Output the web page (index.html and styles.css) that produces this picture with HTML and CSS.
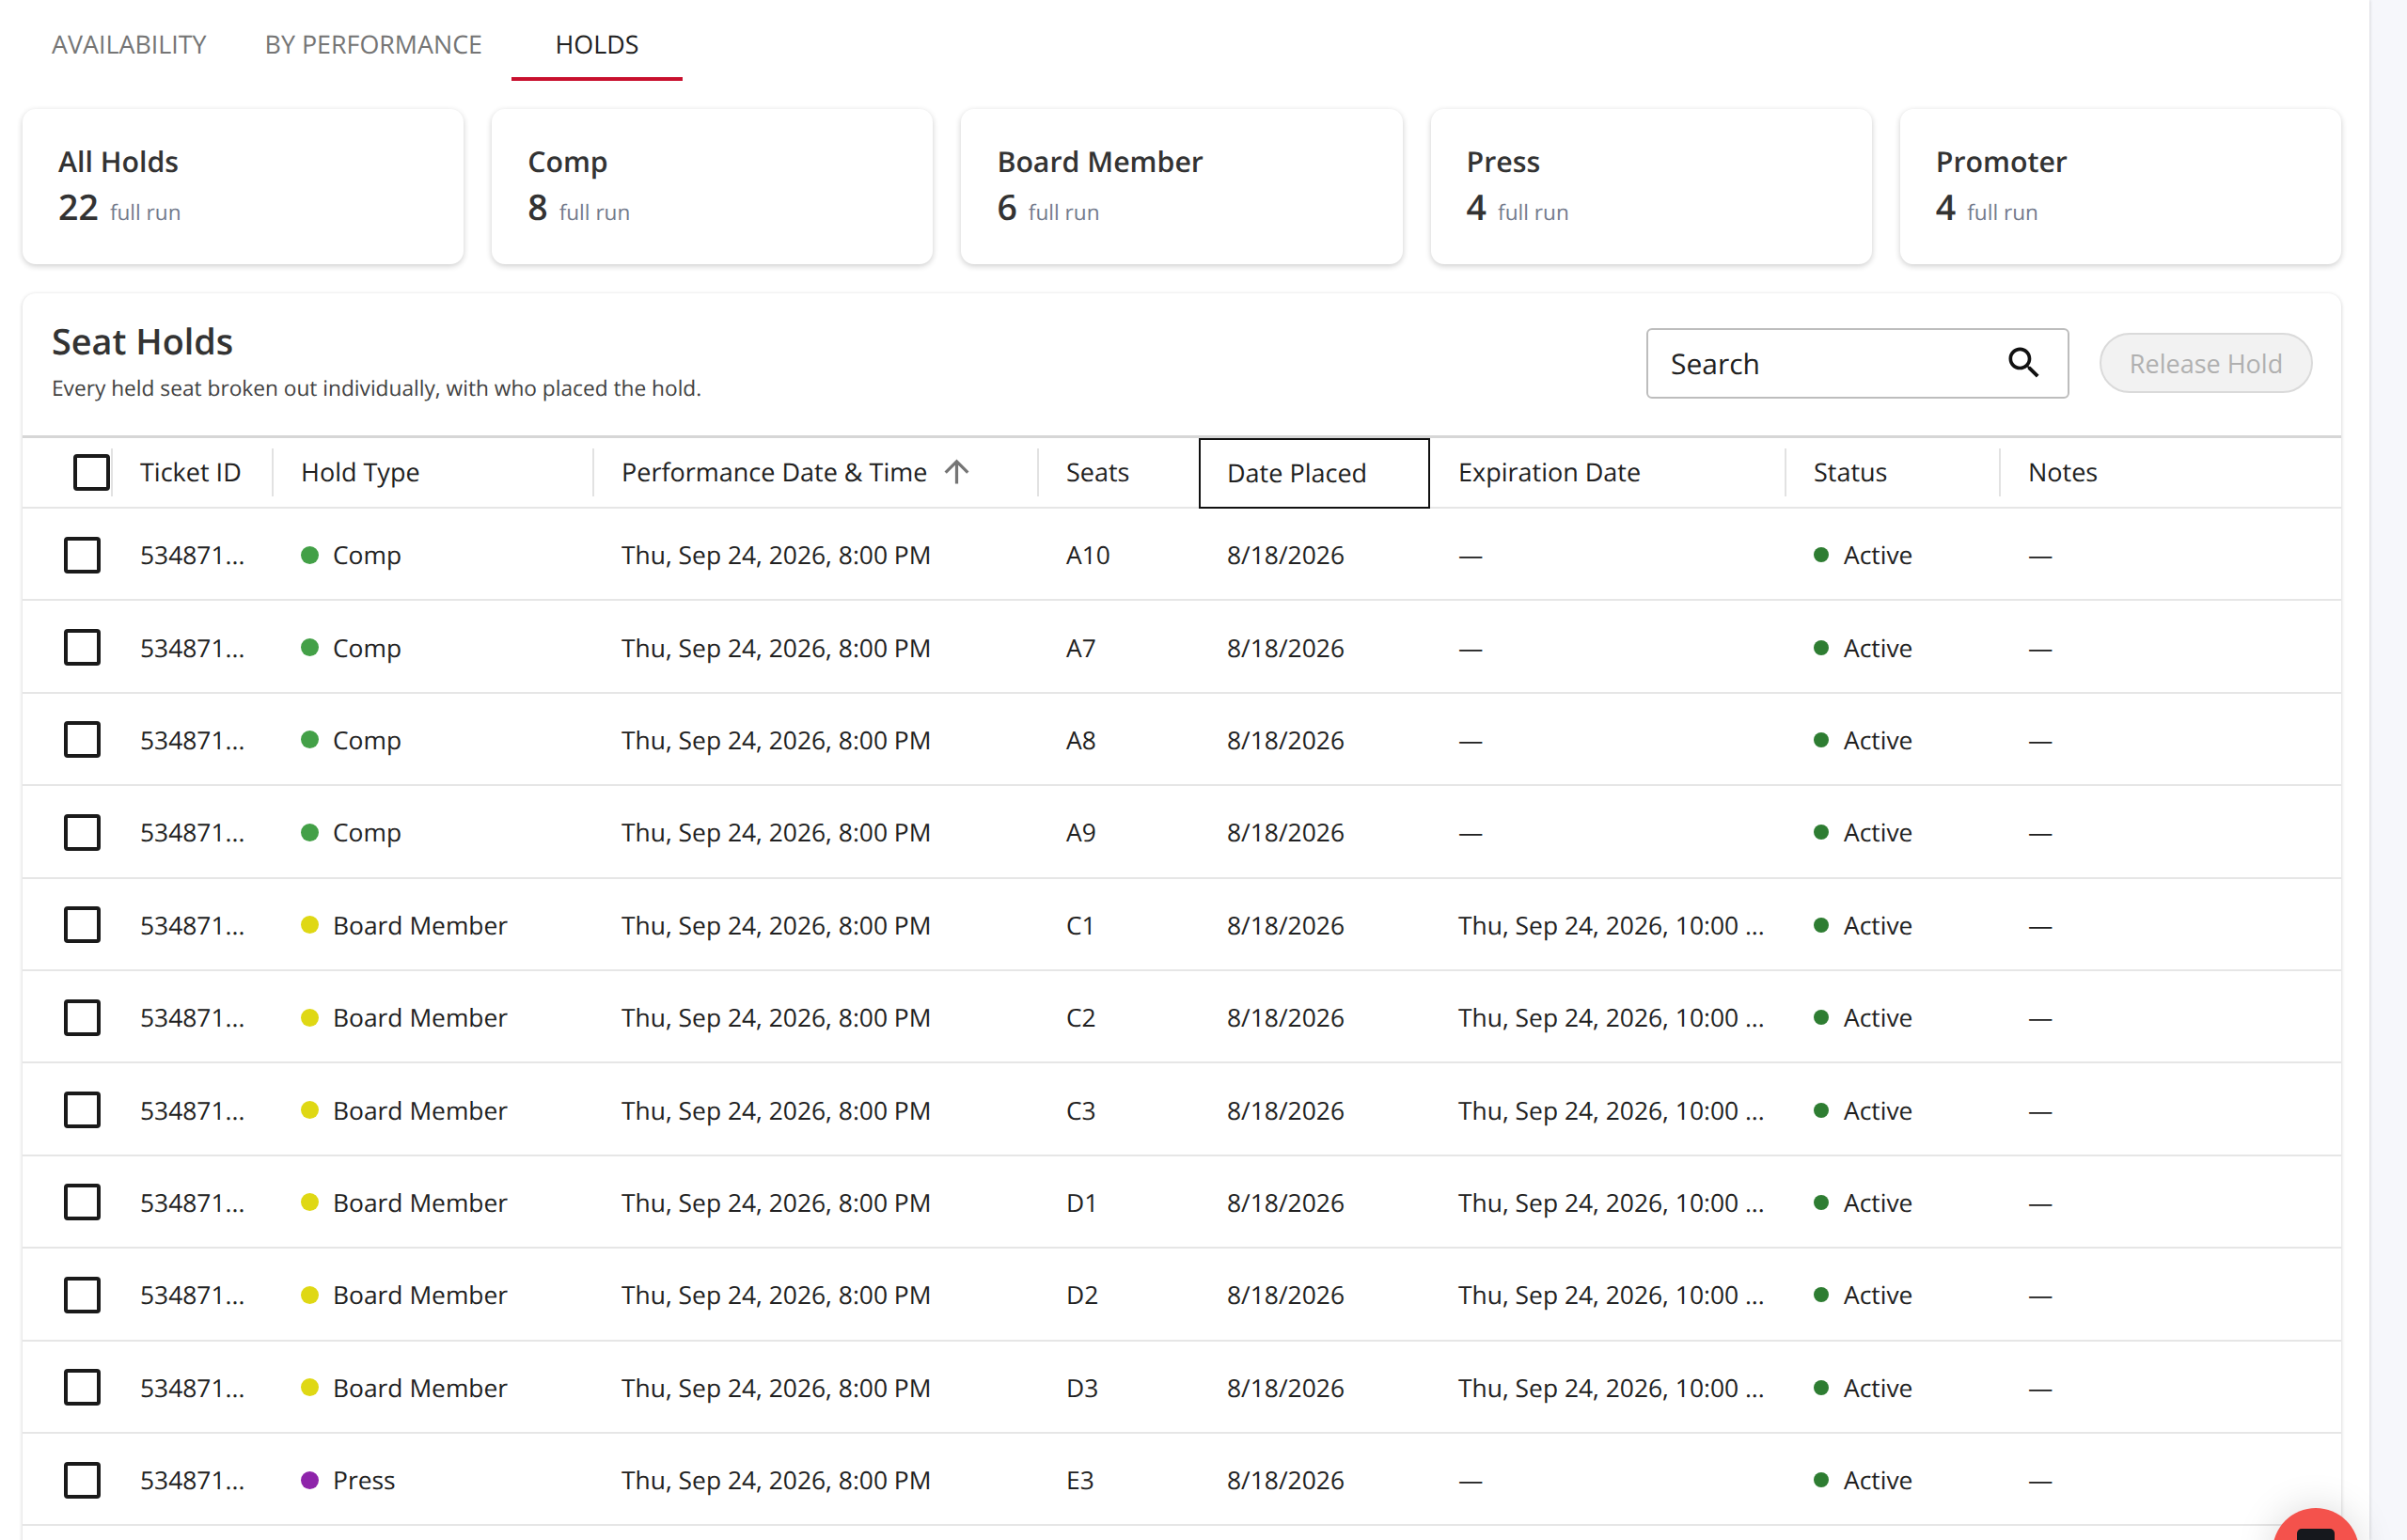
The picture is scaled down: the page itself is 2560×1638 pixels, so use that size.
FILE: index.html
```html
<!DOCTYPE html>
<html lang="en">
<head>
    <meta charset="UTF-8">
    <title>Holds</title>
    <link rel="stylesheet" href="styles.css">
</head>
<body>
    <div class="page">
        <div class="tabs">
            <a class="tab">AVAILABILITY</a>
            <a class="tab">BY PERFORMANCE</a>
            <a class="tab active">HOLDS</a>
        </div>

        <div class="cards">
            <div class="card"><div class="card-title">All Holds</div><div class="card-value"><span class="num">22</span><span class="unit">full run</span></div></div>
            <div class="card"><div class="card-title">Comp</div><div class="card-value"><span class="num">8</span><span class="unit">full run</span></div></div>
            <div class="card"><div class="card-title">Board Member</div><div class="card-value"><span class="num">6</span><span class="unit">full run</span></div></div>
            <div class="card"><div class="card-title">Press</div><div class="card-value"><span class="num">4</span><span class="unit">full run</span></div></div>
            <div class="card"><div class="card-title">Promoter</div><div class="card-value"><span class="num">4</span><span class="unit">full run</span></div></div>
        </div>

        <div class="panel">
            <div class="panel-head">
                <div class="panel-text">
                    <h2>Seat Holds</h2>
                    <p>Every held seat broken out individually, with who placed the hold.</p>
                </div>
                <div class="search">
                    <span>Search</span>
                    <svg viewBox="0 0 24 24"><path d="M15.5 14h-.79l-.28-.27C15.41 12.59 16 11.11 16 9.5 16 5.91 13.09 3 9.5 3S3 5.91 3 9.5 5.91 16 9.5 16c1.61 0 3.09-.59 4.23-1.57l.27.28v.79l5 4.99L20.49 19l-4.99-5zm-6 0C7.01 14 5 11.99 5 9.5S7.01 5 9.5 5 14 7.01 14 9.5 11.99 14 9.5 14z"/></svg>
                </div>
                <button class="release" disabled>Release Hold</button>
            </div>

            <div class="row head">
                <div class="cell check"><span class="box"></span></div>
                <div class="cell sep">Ticket ID</div>
                <div class="cell sep">Hold Type</div>
                <div class="cell sep">Performance Date &amp; Time
                    <svg class="arrow" viewBox="0 0 24 24"><path d="M4 12l1.41 1.41L11 7.83V20h2V7.83l5.58 5.59L20 12l-8-8-8 8z"/></svg>
                </div>
                <div class="cell sep">Seats</div>
                <div class="cell focused">Date Placed</div>
                <div class="cell">Expiration Date</div>
                <div class="cell sep">Status</div>
                <div class="cell sep">Notes</div>
            </div>

            <div class="row">
                <div class="cell check"><span class="box"></span></div><div class="cell">534871...</div>
                <div class="cell"><i class="dot comp"></i>Comp</div><div class="cell">Thu, Sep 24, 2026, 8:00 PM</div>
                <div class="cell">A10</div><div class="cell">8/18/2026</div><div class="cell">—</div>
                <div class="cell"><i class="status"></i>Active</div><div class="cell">—</div>
            </div>
            <div class="row">
                <div class="cell check"><span class="box"></span></div><div class="cell">534871...</div>
                <div class="cell"><i class="dot comp"></i>Comp</div><div class="cell">Thu, Sep 24, 2026, 8:00 PM</div>
                <div class="cell">A7</div><div class="cell">8/18/2026</div><div class="cell">—</div>
                <div class="cell"><i class="status"></i>Active</div><div class="cell">—</div>
            </div>
            <div class="row">
                <div class="cell check"><span class="box"></span></div><div class="cell">534871...</div>
                <div class="cell"><i class="dot comp"></i>Comp</div><div class="cell">Thu, Sep 24, 2026, 8:00 PM</div>
                <div class="cell">A8</div><div class="cell">8/18/2026</div><div class="cell">—</div>
                <div class="cell"><i class="status"></i>Active</div><div class="cell">—</div>
            </div>
            <div class="row">
                <div class="cell check"><span class="box"></span></div><div class="cell">534871...</div>
                <div class="cell"><i class="dot comp"></i>Comp</div><div class="cell">Thu, Sep 24, 2026, 8:00 PM</div>
                <div class="cell">A9</div><div class="cell">8/18/2026</div><div class="cell">—</div>
                <div class="cell"><i class="status"></i>Active</div><div class="cell">—</div>
            </div>
            <div class="row">
                <div class="cell check"><span class="box"></span></div><div class="cell">534871...</div>
                <div class="cell"><i class="dot board"></i>Board Member</div><div class="cell">Thu, Sep 24, 2026, 8:00 PM</div>
                <div class="cell">C1</div><div class="cell">8/18/2026</div><div class="cell">Thu, Sep 24, 2026, 10:00 ...</div>
                <div class="cell"><i class="status"></i>Active</div><div class="cell">—</div>
            </div>
            <div class="row">
                <div class="cell check"><span class="box"></span></div><div class="cell">534871...</div>
                <div class="cell"><i class="dot board"></i>Board Member</div><div class="cell">Thu, Sep 24, 2026, 8:00 PM</div>
                <div class="cell">C2</div><div class="cell">8/18/2026</div><div class="cell">Thu, Sep 24, 2026, 10:00 ...</div>
                <div class="cell"><i class="status"></i>Active</div><div class="cell">—</div>
            </div>
            <div class="row">
                <div class="cell check"><span class="box"></span></div><div class="cell">534871...</div>
                <div class="cell"><i class="dot board"></i>Board Member</div><div class="cell">Thu, Sep 24, 2026, 8:00 PM</div>
                <div class="cell">C3</div><div class="cell">8/18/2026</div><div class="cell">Thu, Sep 24, 2026, 10:00 ...</div>
                <div class="cell"><i class="status"></i>Active</div><div class="cell">—</div>
            </div>
            <div class="row">
                <div class="cell check"><span class="box"></span></div><div class="cell">534871...</div>
                <div class="cell"><i class="dot board"></i>Board Member</div><div class="cell">Thu, Sep 24, 2026, 8:00 PM</div>
                <div class="cell">D1</div><div class="cell">8/18/2026</div><div class="cell">Thu, Sep 24, 2026, 10:00 ...</div>
                <div class="cell"><i class="status"></i>Active</div><div class="cell">—</div>
            </div>
            <div class="row">
                <div class="cell check"><span class="box"></span></div><div class="cell">534871...</div>
                <div class="cell"><i class="dot board"></i>Board Member</div><div class="cell">Thu, Sep 24, 2026, 8:00 PM</div>
                <div class="cell">D2</div><div class="cell">8/18/2026</div><div class="cell">Thu, Sep 24, 2026, 10:00 ...</div>
                <div class="cell"><i class="status"></i>Active</div><div class="cell">—</div>
            </div>
            <div class="row">
                <div class="cell check"><span class="box"></span></div><div class="cell">534871...</div>
                <div class="cell"><i class="dot board"></i>Board Member</div><div class="cell">Thu, Sep 24, 2026, 8:00 PM</div>
                <div class="cell">D3</div><div class="cell">8/18/2026</div><div class="cell">Thu, Sep 24, 2026, 10:00 ...</div>
                <div class="cell"><i class="status"></i>Active</div><div class="cell">—</div>
            </div>
            <div class="row">
                <div class="cell check"><span class="box"></span></div><div class="cell">534871...</div>
                <div class="cell"><i class="dot press"></i>Press</div><div class="cell">Thu, Sep 24, 2026, 8:00 PM</div>
                <div class="cell">E3</div><div class="cell">8/18/2026</div><div class="cell">—</div>
                <div class="cell"><i class="status"></i>Active</div><div class="cell">—</div>
            </div>
        </div>
    </div>

    <div class="fab"><span class="fab-icon"></span></div>
</body>
</html>
```

FILE: styles.css
```css
html, body {
    height: 100%;
}

body {
    margin: 0;
    overflow: hidden;
    background-color: #f6f7fb;
    font-family: "Open Sans", sans-serif;
    font-size: 26.4px;
    color: #212121;
    text-rendering: geometricPrecision;
}

.page {
    width: 2520px;
    height: 100%;
    box-sizing: border-box;
    padding-right: 30px;
    padding-left: 24px;
    background-color: #fff;
    box-shadow: 1px 0 3px rgba(0, 0, 0, 0.12);
    overflow: hidden;
}

/* tabs */
.tabs {
    display: flex;
    height: 86px;
}

.tab {
    padding: 28px 31px 0;
    font-size: 26.85px;
    line-height: 38px;
    color: #757575;
}

.tab.active {
    width: 182px;
    box-sizing: border-box;
    padding-left: 0;
    padding-right: 0;
    text-align: center;
    color: #212121;
    border-bottom: 4px solid #c8102e;
}

/* summary cards */
.cards {
    display: flex;
    gap: 30px;
    margin-top: 30px;
}

.card {
    flex: 1;
    height: 165px;
    box-sizing: border-box;
    padding: 35px 38px 0;
    background-color: #fff;
    border-radius: 14px;
    box-shadow: 0 2px 6px rgba(0, 0, 0, 0.2);
}

.card-title {
    font-size: 30.3px;
    font-weight: 600;
    line-height: 42px;
    color: #333;
}

.card-value {
    display: flex;
    align-items: baseline;
    gap: 12px;
    margin-top: 1px;
}

.num {
    font-size: 37.5px;
    font-weight: 600;
    line-height: 52px;
    color: #333;
}

.unit {
    font-size: 22.6px;
    color: #737a8c;
}

/* seat holds */
.panel {
    margin-top: 31px;
    background-color: #fff;
    border-radius: 14px 14px 0 0;
    box-shadow: 0 1px 4px rgba(0, 0, 0, 0.2);
    height: 1400px;
}

.panel-head {
    display: flex;
    align-items: center;
    height: 148px;
    padding: 0 30px 3px 31px;
}

.panel-text {
    flex: 1;
    margin-top: -4px;
}

.panel-text h2 {
    margin: 0;
    font-size: 37.8px;
    font-weight: 600;
    line-height: 50px;
    color: #333;
}

.panel-text p {
    margin: 8px 0 0;
    font-size: 22.7px;
    line-height: 32px;
    color: #424242;
}

.search {
    display: flex;
    align-items: center;
    justify-content: space-between;
    width: 450px;
    height: 75px;
    box-sizing: border-box;
    padding: 0 24px 0 24px;
    border: 2px solid #bdbdbd;
    border-radius: 6px;
    font-size: 30px;
}

.search svg {
    width: 44px;
    height: 44px;
    fill: #111;
}

.release {
    width: 227px;
    height: 64px;
    margin-left: 32px;
    padding: 0;
    background-color: #f2f2f2;
    border: 2px solid #dadada;
    border-radius: 32px;
    font-family: inherit;
    font-size: 27px;
    color: #b0b0b0;
}

/* table */
.row {
    display: grid;
    grid-template-columns: 95px 171px 341px 473px 171px 246px 378px 228px 1fr;
    height: 98.4px;
    box-sizing: border-box;
    border-bottom: 2px solid #e6e6e6;
}

.row.head {
    height: 78px;
    border-top: 3px solid #d6d6d6;
    font-size: 27px;
}

.cell {
    display: flex;
    align-items: center;
    position: relative;
    padding-top: 2px;
    padding-left: 30px;
    white-space: nowrap;
}

.head .cell {
    padding-top: 0;
    padding-bottom: 3px;
}

.cell.check {
    padding-left: 44px;
}

.head .cell.check {
    padding-left: 54px;
    padding-bottom: 0;
}

.box {
    width: 39px;
    height: 39px;
    box-sizing: border-box;
    border: 4px solid #1a1a1a;
    border-radius: 4px;
}

.sep::before {
    content: "";
    position: absolute;
    left: -1px;
    top: 11px;
    bottom: 11px;
    width: 2px;
    background-color: #e2e2e2;
}

.focused {
    outline: 2px solid #111;
    outline-offset: -2px;
    margin-bottom: -2px;
}

.arrow {
    width: 39px;
    height: 39px;
    margin-left: 12px;
    fill: #757575;
}

.dot {
    width: 19px;
    height: 19px;
    margin-right: 15px;
    border-radius: 50%;
}

.dot.comp {
    background-color: #43a047;
}

.dot.board {
    background-color: #dfd814;
}

.dot.press {
    background-color: #8e24aa;
}

.status {
    width: 16px;
    height: 16px;
    margin-right: 16px;
    border-radius: 50%;
    background-color: #2e7d32;
}

/* chat button */
.fab {
    position: absolute;
    left: 2417px;
    top: 1604px;
    width: 92px;
    height: 92px;
    border-radius: 50%;
    background-color: #f4524c;
    box-shadow: 0 0 40px rgba(0, 0, 0, 0.15);
}

.fab-icon {
    position: absolute;
    left: 26px;
    top: 22px;
    width: 40px;
    height: 40px;
    border-radius: 5px;
    background-color: #16181d;
}
```
